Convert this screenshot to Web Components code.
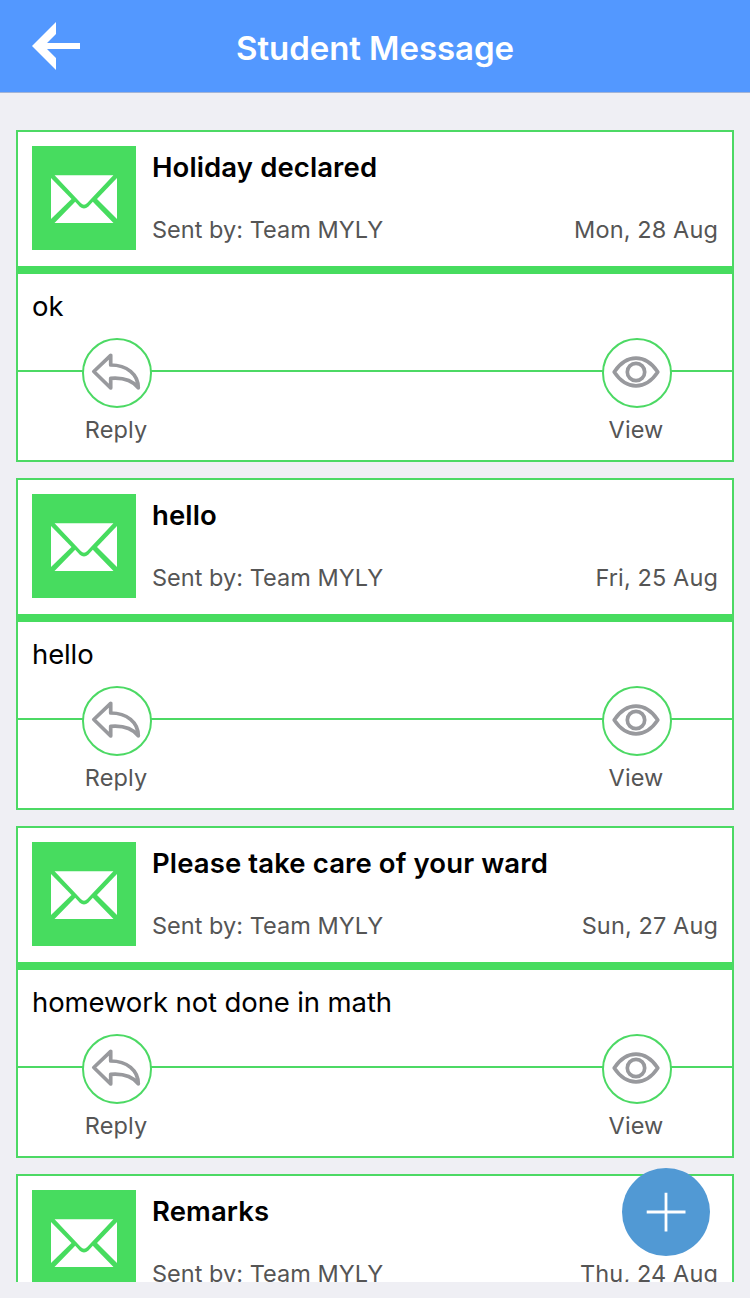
<!DOCTYPE html>
<html lang="en">
<head>
<meta charset="utf-8">
<title>Student Message</title>
<style>
html,body{margin:0;height:100%;overflow:hidden;background:#efeff4}
body{font-family:Inter,"Liberation Sans",sans-serif}
</style>
</head>
<body>
<message-app></message-app>
<script>
const define = (name, html, setup) => {
  const template = document.createElement('template');
  template.innerHTML = html;
  customElements.define(name, class extends HTMLElement {
    constructor() {
      super();
      this.attachShadow({ mode: 'open' }).append(template.content.cloneNode(true));
      if (setup) setup(this.shadowRoot);
    }
  });
};

define('nav-bar', `
<style>
:host{display:grid;grid-template-columns:112px 1fr 112px;height:92px;flex:none;background:#5398ff;border-bottom:1px solid #a3b4d6;color:#fff}
svg{display:block;width:112px;height:92px}
h1{margin:0;padding-top:5px;text-align:center;font-size:33px;line-height:86px;font-weight:590;letter-spacing:-.07px;white-space:nowrap}
</style>
<svg viewBox="0 0 112 92" fill="#fff"><path d="M32 46 56 22V34L47 43H80V49H47L56 58V70Z"/></svg>
<h1><slot></slot></h1>`);

define('mail-icon', `
<style>:host{display:block;width:104px;height:104px;background:#47dc5f}svg{display:block}</style>
<svg width="104" height="104" viewBox="0 0 104 104" fill="#fff">
<path d="M22.6 29.3H81.4L55.2 57Q52 60.6 48.8 57Z"/>
<path d="M19 32 39.5 53 19 73Z"/>
<path d="M85 32 65 53 85 73Z"/>
<path d="M22.5 77 43.2 55.8 47.8 60.7Q52 64.2 56.2 60.7L60.8 55.8 81.5 77Z"/>
</svg>`);

define('reply-icon', `
<style>:host,svg{display:block}</style>
<svg width="70" height="70" viewBox="0 0 70 70" fill="none" stroke="#98999d" stroke-width="3.7" stroke-linejoin="round">
<path d="M11.8 33.5 28.7 17.4V27C45 27 56.2 36.5 56.3 49.8C50 42 41 39.4 28.7 40.4V50Z"/></svg>`);

define('eye-icon', `
<style>:host,svg{display:block}</style>
<svg width="70" height="70" viewBox="0 0 70 70" fill="none" stroke="#98999d" stroke-width="3.7" stroke-linejoin="round">
<path d="M12.2 34C24.5 15.6 43.5 15.6 55.8 34C43.5 52.4 24.5 52.4 12.2 34Z"/><circle cx="34" cy="34" r="8.7"/></svg>`);

define('round-action', `
<style>
:host{display:flex;flex-direction:column;align-items:center;width:70px}
.ring{box-sizing:border-box;width:70px;height:70px;border:2px solid #4cd964;border-radius:50%;background:#fff;overflow:hidden}
.art{margin:-2px}
.label{margin:6px 2px 0 0;font-size:23.5px;line-height:31px;color:#555;letter-spacing:.12px;white-space:nowrap}
</style>
<div class="ring"><div class="art"><slot name="icon"></slot></div></div>
<div class="label"><slot></slot></div>`);

define('message-card', `
<style>
:host{display:block;box-sizing:border-box;height:332px;flex:none;border:2px solid #4cd964;background:#fff}
:host([compact]) .actions,:host([compact]) p{display:none}
header{box-sizing:border-box;height:142px;display:grid;grid-template-columns:104px 1fr;column-gap:16px;padding:14px 14px 0;border-bottom:8px solid #47dc5f}
h2{margin:1px 0 0;height:40px;font-size:27.5px;line-height:40px;font-weight:600;color:#000;letter-spacing:.11px;white-space:nowrap}
.meta{display:flex;justify-content:space-between;margin-top:27px;font-size:23.5px;line-height:31px;color:#555;letter-spacing:.03px;white-space:nowrap}
.date{letter-spacing:.12px}
p{margin:12px 14px 0;height:52px;font-size:27.5px;line-height:40px;color:#000;letter-spacing:-.11px;white-space:nowrap}
.actions{display:flex;justify-content:space-between;padding:0 60px 0 64px;height:120px;background:linear-gradient(#4cd964,#4cd964) 0 32px/100% 2px no-repeat}
</style>
<header><mail-icon></mail-icon><div><h2><slot name="subject"></slot></h2>
<div class="meta"><span><slot name="sender"></slot></span><span class="date"><slot name="date"></slot></span></div></div></header>
<p><slot></slot></p>
<div class="actions">
<round-action><reply-icon slot="icon"></reply-icon>Reply</round-action>
<round-action><eye-icon slot="icon"></eye-icon>View</round-action>
</div>`);

define('add-button', `
<style>:host{position:absolute;right:40px;bottom:42px;width:88px;height:88px;border-radius:50%;background:#5199d4}svg{display:block}</style>
<svg width="88" height="88" viewBox="0 0 88 88" stroke="#fff" stroke-width="2.8"><path d="M24.7 44H63.5M44 24.7V63.5"/></svg>`);

define('message-app', `
<style>
:host{display:flex;flex-direction:column;position:relative;width:750px;height:1298px;background:#efeff4;overflow:hidden}
main{flex:1;min-height:0;display:flex;flex-direction:column;gap:16px;margin:37px 16px 16px;overflow:hidden}
</style>
<nav-bar>Student Message</nav-bar>
<main></main>
<add-button></add-button>`, root => {
  const messages = [
    ['Holiday declared', 'Mon, 28 Aug', 'ok'],
    ['hello', 'Fri, 25 Aug', 'hello'],
    ['Please take care of your ward', 'Sun, 27 Aug', 'homework not done in math'],
    ['Remarks', 'Thu, 24 Aug', '']
  ];
  const main = root.querySelector('main');
  for (const [subject, date, body] of messages) {
    const card = document.createElement('message-card');
    const parts = { subject, sender: 'Sent by: Team MYLY', date };
    for (const [slot, text] of Object.entries(parts)) {
      const span = document.createElement('span');
      span.slot = slot;
      span.textContent = text;
      card.append(span);
    }
    card.append(body);
    card.toggleAttribute('compact', !body);
    main.append(card);
  }
});
</script>
</body>
</html>
